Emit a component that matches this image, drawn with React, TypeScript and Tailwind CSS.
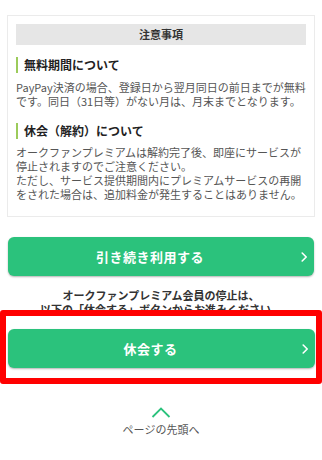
import React from "react";

const Chevron = () => (
  <svg
    width="7"
    height="10"
    viewBox="0 0 7 10"
    className="absolute right-[6px] top-1/2 -translate-y-1/2"
    fill="none"
  >
    <polyline points="1.2,1 5.2,5 1.2,9" stroke="#ffffff" strokeWidth="1.6" strokeLinecap="round" strokeLinejoin="round" />
  </svg>
);

const GreenButton = ({ label }: { label: string }) => (
  <div className="relative flex h-[39px] w-full items-center justify-center rounded-[6px] bg-[#2bc27c] pr-[22px] shadow-[0_1px_2px_rgba(0,0,0,0.3)]">
    <span className="text-[13px] font-bold leading-none tracking-[0.5px] text-white">{label}</span>
    <Chevron />
  </div>
);

export default function App() {
  return (
    <div className="h-[460px] w-[322px] overflow-hidden bg-white font-['Noto_Sans_CJK_JP','Noto_Sans',sans-serif]">
      <div className="px-[7px] pt-[15px]">
        <div className="border border-[#ebebeb] px-2 pb-[15px] pt-2">
          <div className="flex h-[21px] items-center justify-center bg-[#e6e6e6] text-[11px] font-bold text-[#333]">
            注意事項
          </div>

          <h3 className="mt-3 border-l-2 border-[#9ccb5b] pl-[6px] text-[12px] font-bold leading-[16px] text-[#222]">
            無料期間について
          </h3>
          <p className="mt-[7px] whitespace-nowrap text-[11px] leading-[14px] text-[#555]">
            PayPay決済の場合、登録日から翌月同日の前日までが無料
            <br />
            です。同日（31日等）がない月は、月末までとなります。
          </p>

          <h3 className="mt-[15px] border-l-2 border-[#9ccb5b] pl-[6px] text-[12px] font-bold leading-[16px] text-[#222]">
            休会（解約）について
          </h3>
          <p className="mt-[6px] whitespace-nowrap text-[11px] leading-[14px] text-[#555]">
            オークファンプレミアムは解約完了後、即座にサービスが
            <br />
            停止されますのでご注意ください。
            <br />
            ただし、サービス提供期間内にプレミアムサービスの再開
            <br />
            をされた場合は、追加料金が発生することはありません。
          </p>
        </div>
      </div>

      <div className="mt-5 px-2">
        <GreenButton label="引き続き利用する" />
      </div>

      <p className="mt-3 text-center text-[11px] font-bold leading-[14px] text-[#333]">
        オークファンプレミアム会員の停止は、
        <br />
        以下の「休会する」ボタンからお進みください。
      </p>

      <div className="relative -mt-[6px] w-[322px] rounded-[3px] border-[6px] border-[#ff0000] bg-white pb-[10px] pl-[2px] pr-[1px] pt-[13px]">
        <GreenButton label="休会する" />
      </div>

      <div className="mt-[23px] flex flex-col items-center">
        <svg width="20" height="11" viewBox="0 0 20 11" fill="none">
          <polyline points="1.5,10 10,1.5 18.5,10" stroke="#2bc27c" strokeWidth="1.8" />
        </svg>
        <span className="mt-[4px] text-[11px] leading-[14px] text-[#555]">ページの先頭へ</span>
      </div>
    </div>
  );
}
